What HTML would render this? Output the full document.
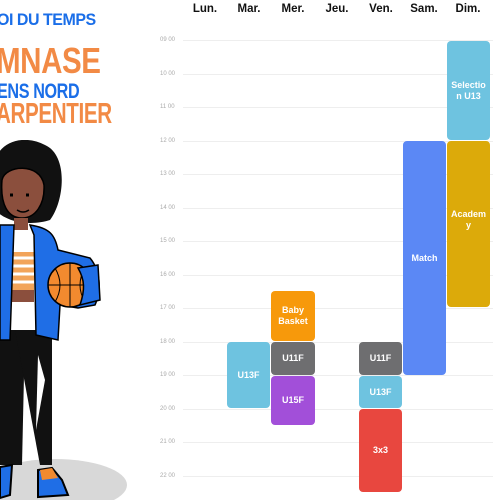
<!DOCTYPE html>
<html><head><meta charset="utf-8"><style>
*{margin:0;padding:0;box-sizing:border-box}
body{width:500px;height:500px;background:#fff;position:relative;overflow:hidden;font-family:"Liberation Sans",sans-serif}
.t{position:absolute;font-weight:900;white-space:nowrap;transform-origin:left top;letter-spacing:-0.5px}
.day{position:absolute;top:3px;font-size:11.5px;font-weight:bold;color:#111;width:44px;text-align:center}
.hr{position:absolute;left:160px;font-size:6px;color:#aaa}
.ln{position:absolute;left:183px;width:310px;height:1px;background:#eee}
.ev{position:absolute;border-radius:4px;color:#fff;font-size:9px;font-weight:bold;display:flex;align-items:center;justify-content:center;text-align:center;line-height:11px}
</style></head><body>
<div class="t" style="left:-3px;top:10px;font-size:17px;color:#1a6ee8;transform:scaleX(0.94)">OI DU TEMPS</div>
<div class="t" style="left:-4px;top:40px;font-size:36px;color:#f28a45;transform:scaleX(0.82)">MNASE</div>
<div class="t" style="left:-3px;top:80px;font-size:21px;color:#1a6ee8;transform:scaleX(0.77)">ENS NORD</div>
<div class="t" style="left:-4px;top:98px;font-size:29px;color:#f28a45;transform:scaleX(0.71)">ARPENTIER</div>

<svg style="position:absolute;left:0;top:140px" width="160" height="360" viewBox="0 0 160 360">
<ellipse cx="55" cy="345" rx="72" ry="26" fill="#d8d8d8"/>
<path d="M0 190 L25 190 L22 325 L0 325Z" fill="#111"/>
<path d="M15 190 L52 190 L52 325 L40 325 Z" fill="#111"/>
<path d="M38 215 L45 240 L36 290Z" fill="#fff"/>
<path d="M0 327 L12 325 L10 355 L0 358Z" fill="#1f6ee6" stroke="#000" stroke-width="2"/>
<path d="M38 330 L52 328 L62 340 L68 355 L38 357Z" fill="#1f6ee6" stroke="#000" stroke-width="2"/>
<path d="M40 330 L52 328 L58 338 L42 340Z" fill="#f28a2f"/>
<path d="M-5 30 C-8 5 20 -8 45 5 C68 15 65 60 50 80 C35 85 10 85 -5 70Z" fill="#111"/>
<path d="M2 40 C5 25 40 22 44 45 C45 65 35 78 22 78 C8 78 0 65 2 40Z" fill="#8b4f3d" stroke="#000" stroke-width="1.5"/>
<path d="M10 55 l3 0 M26 55 l3 0" stroke="#000" stroke-width="3"/>
<path d="M17 70 q6 4 12 0" stroke="#000" stroke-width="1.5" fill="none"/>
<rect x="14" y="78" width="14" height="12" fill="#8b4f3d"/>
<rect x="12" y="112" width="22" height="40" fill="#f2a45a"/>
<path d="M12 118h22M12 126h22M12 134h22M12 142h22" stroke="#fff" stroke-width="3"/>
<rect x="12" y="150" width="22" height="12" fill="#8b4f3d"/>
<path d="M0 85 L14 85 L10 200 L0 200Z" fill="#1f6ee6" stroke="#000" stroke-width="1.5"/>
<path d="M30 85 C50 88 55 95 58 110 L90 118 C100 130 102 150 95 165 L78 168 L60 165 L58 200 L36 195 L34 95Z" fill="#1f6ee6" stroke="#000" stroke-width="1.5"/>
<circle cx="70" cy="145" r="22" fill="#f28a2f" stroke="#000" stroke-width="1.5"/>
<path d="M48 145h44M70 123v44M55 128q10 17 0 34M85 128q-10 17 0 34" stroke="#000" stroke-width="1" fill="none"/>
<path d="M78 128 L98 125 L100 160 L80 165 C85 150 85 140 78 128Z" fill="#1f6ee6" stroke="#000" stroke-width="1.5"/>
</svg>

<div class="day" style="left:183px">Lun.</div>
<div class="day" style="left:227px">Mar.</div>
<div class="day" style="left:271px">Mer.</div>
<div class="day" style="left:315px">Jeu.</div>
<div class="day" style="left:359px">Ven.</div>
<div class="day" style="left:402px">Sam.</div>
<div class="day" style="left:446px">Dim.</div>

<div class="hr" style="top:37px">09 00</div><div class="ln" style="top:40px"></div>
<div class="hr" style="top:71px">10 00</div><div class="ln" style="top:74px"></div>
<div class="hr" style="top:104px">11 00</div><div class="ln" style="top:107px"></div>
<div class="hr" style="top:138px">12 00</div><div class="ln" style="top:141px"></div>
<div class="hr" style="top:171px">13 00</div><div class="ln" style="top:174px"></div>
<div class="hr" style="top:205px">14 00</div><div class="ln" style="top:208px"></div>
<div class="hr" style="top:238px">15 00</div><div class="ln" style="top:241px"></div>
<div class="hr" style="top:272px">16 00</div><div class="ln" style="top:275px"></div>
<div class="hr" style="top:305px">17 00</div><div class="ln" style="top:308px"></div>
<div class="hr" style="top:339px">18 00</div><div class="ln" style="top:342px"></div>
<div class="hr" style="top:372px">19 00</div><div class="ln" style="top:375px"></div>
<div class="hr" style="top:406px">20 00</div><div class="ln" style="top:409px"></div>
<div class="hr" style="top:439px">21 00</div><div class="ln" style="top:442px"></div>
<div class="hr" style="top:473px">22 00</div><div class="ln" style="top:476px"></div>

<div class="ev" style="left:447px;top:41px;width:43px;height:99px;background:#6ec3e0">Selectio<br>n U13</div>
<div class="ev" style="left:447px;top:141px;width:43px;height:166px;background:#dcaa0a;padding-bottom:8px">Academ<br>y</div>
<div class="ev" style="left:403px;top:141px;width:43px;height:234px;background:#5b88f5">Match</div>
<div class="ev" style="left:271px;top:291px;width:44px;height:50px;background:#f7990b">Baby<br>Basket</div>
<div class="ev" style="left:271px;top:342px;width:44px;height:33px;background:#6e6e70">U11F</div>
<div class="ev" style="left:271px;top:376px;width:44px;height:49px;background:#a24fd9">U15F</div>
<div class="ev" style="left:227px;top:342px;width:43px;height:66px;background:#6ec3e0">U13F</div>
<div class="ev" style="left:359px;top:342px;width:43px;height:33px;background:#6e6e70">U11F</div>
<div class="ev" style="left:359px;top:376px;width:43px;height:32px;background:#6ec3e0">U13F</div>
<div class="ev" style="left:359px;top:409px;width:43px;height:83px;background:#e8473f">3x3</div>
</body></html>
